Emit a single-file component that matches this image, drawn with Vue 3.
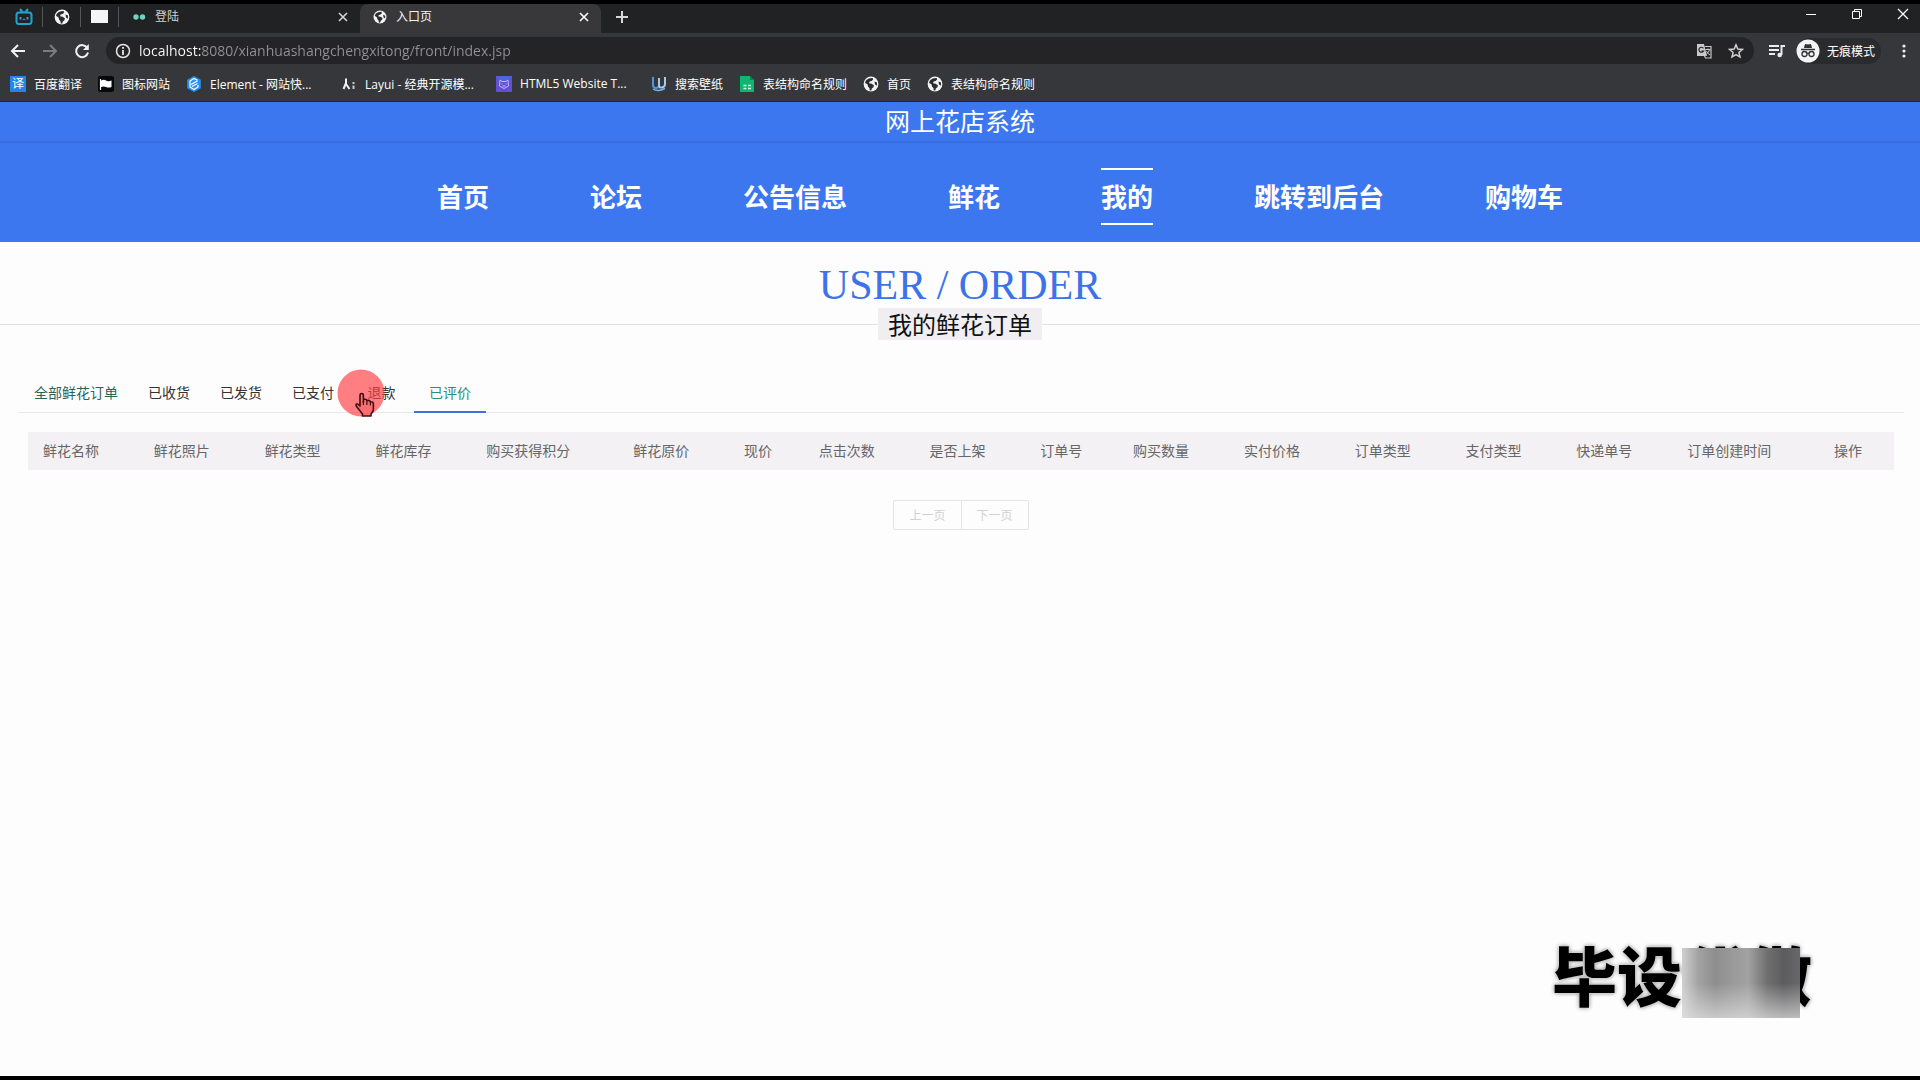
<script setup>
import { ref } from 'vue'

const url = ref('localhost:8080/xianhuashangchengxitong/front/index.jsp')

const bookmarks = [
  { icon: 'fanyi', label: '百度翻译' },
  { icon: 'flag', label: '图标网站' },
  { icon: 'element', label: 'Element - 网站快...', wide: true },
  { icon: 'layui', label: 'Layui - 经典开源模...', wide: true },
  { icon: 'html5', label: 'HTML5 Website T...', wide: true },
  { icon: 'search', label: '搜索壁纸' },
  { icon: 'sheet', label: '表结构命名规则' },
  { icon: 'globe', label: '首页' },
  { icon: 'globe', label: '表结构命名规则' }
]

const menu = ['首页', '论坛', '公告信息', '鲜花', '我的', '跳转到后台', '购物车']
const activeMenu = ref('我的')

const orderTabs = ['全部鲜花订单', '已收货', '已发货', '已支付', '退款', '已评价']
const activeTab = ref('已评价')

const columns = [
  '鲜花名称', '鲜花照片', '鲜花类型', '鲜花库存', '购买获得积分', '鲜花原价',
  '现价', '点击次数', '是否上架', '订单号', '购买数量', '实付价格',
  '订单类型', '支付类型', '快递单号', '订单创建时间', '操作'
]
</script>

<template>
  <div class="screen">
    <svg class="defs" width="0" height="0" aria-hidden="true">
      <symbol id="globe" viewBox="0 0 16 16">
        <circle cx="8" cy="8" r="7.4" fill="#f4f4f4" />
        <path d="M7 2.2 9.6 2l.6 1.6-1.6 1.5-2 .5-.5 1.7 2.5.5 2.3 1.4-.5 2-1.6 1.2-.5 2-1.6.2-.2-2.4L5 10.500 4.600 8.500 2 6.700C2.500 4.200 4.500 2.600 7 2.200Z" fill="#2b2c30" />
        <path d="M11.500 5.500 14 6.500 13.800 9.800 12 8.400Z" fill="#2b2c30" />
      </symbol>
    </svg>

    <header class="browser">
      <div class="tabstrip">
        <button class="pinned" aria-label="bilibili">
          <svg width="18" height="18" viewBox="0 0 18 18" fill="none" stroke="#20a5cf" stroke-width="2">
            <rect x="1.500" y="4.500" width="15" height="11.500" rx="2.500" />
            <path d="M5 1l2.500 3M13 1l-2.500 3M5.500 9v2.500M12.500 9v2.500" />
            <path d="M7.500 12l1.500-1 1.500 1" stroke-width="1" />
          </svg>
        </button>
        <button class="pinned" aria-label="首页"><svg width="16" height="16"><use href="#globe" /></svg></button>
        <button class="pinned" aria-label="空白页"><span class="blank"></span></button>
        <div class="tab">
          <svg class="favicon" width="14" height="14" viewBox="0 0 14 14" fill="#6fd3bd"><circle cx="4" cy="7" r="2.700" /><circle cx="10.500" cy="7" r="2.700" /></svg>
          <span class="tab-title">登陆</span>
          <button class="close" aria-label="关闭"><svg width="10" height="10" viewBox="0 0 10 10" stroke="#d6d6d8" stroke-width="1.600"><path d="M1 1l8 8M9 1l-8 8" /></svg></button>
        </div>
        <div class="tab current">
          <svg class="favicon" width="14" height="14"><use href="#globe" /></svg>
          <span class="tab-title">入口页</span>
          <button class="close" aria-label="关闭"><svg width="10" height="10" viewBox="0 0 10 10" stroke="#fff" stroke-width="1.600"><path d="M1 1l8 8M9 1l-8 8" /></svg></button>
        </div>
        <button class="newtab" aria-label="新标签页"><svg width="14" height="14" viewBox="0 0 14 14" stroke="#d8d8da" stroke-width="2"><path d="M7 1v12M1 7h12" /></svg></button>
        <div class="window-buttons">
          <button aria-label="最小化"><svg width="12" height="12" viewBox="0 0 12 12" stroke="#fff"><path d="M1 6.500h10" /></svg></button>
          <button aria-label="还原"><svg width="12" height="12" viewBox="0 0 12 12" fill="none" stroke="#fff"><path d="M1.500 3.500h7v7h-7zM3.500 3.500v-2h7v7h-2" /></svg></button>
          <button aria-label="关闭窗口"><svg width="12" height="12" viewBox="0 0 12 12" stroke="#fff" stroke-width="1.300"><path d="M1 1l10 10M11 1L1 11" /></svg></button>
        </div>
      </div>

      <div class="toolbar">
        <button class="tool" aria-label="后退"><svg width="16" height="16" viewBox="0 0 16 16" fill="none" stroke="#f1f1f1" stroke-width="2"><path d="M15 8H2M8 2L2 8l6 6" /></svg></button>
        <button class="tool" aria-label="前进"><svg width="16" height="16" viewBox="0 0 16 16" fill="none" stroke="#7b7c80" stroke-width="2"><path d="M1 8h13M8 2l6 6-6 6" /></svg></button>
        <button class="tool" aria-label="重新加载"><svg width="16" height="16" viewBox="0 0 16 16" fill="none" stroke="#f1f1f1" stroke-width="2"><path d="M13.300 5A6 6 0 1 0 14 9.500" /><path d="M14.800 1v6H9z" fill="#f1f1f1" stroke="none" /></svg></button>
        <div class="omnibox">
          <svg width="16" height="16" viewBox="0 0 16 16" fill="none" stroke="#e6e6e6" stroke-width="1.500"><circle cx="8" cy="8" r="6.500" /><path d="M8 7v5M8 4v1.800" stroke-width="1.800" /></svg>
          <input v-model="url" class="url" type="text" aria-label="地址" spellcheck="false" />
          <button aria-label="翻译">
            <svg width="16" height="16" viewBox="0 0 16 16"><path d="M1 1h7l3 12H1z" fill="#c9c9cb" /><path d="M9 3.500h6v11.500H9.500L8.500 13" fill="none" stroke="#c9c9cb" stroke-width="1.200" /><path d="M7.500 5.300A2.500 2.500 0 1 0 7.600 8H5.500" fill="none" stroke="#242427" stroke-width="1.200" /><path d="M9.500 6.500h5M12 5.500v1M13.500 6.500q-.5 3-3 4.500M10.500 8q1 2.500 3.500 4" fill="none" stroke="#c9c9cb" /></svg>
          </button>
          <button aria-label="收藏"><svg width="16" height="16" viewBox="0 0 16 16" fill="none" stroke="#cfcfd1" stroke-width="1.500"><path d="M8 1.800l1.800 4.200 4.600.4-3.500 3 1.100 4.500-4-2.400-4 2.400 1.100-4.500-3.500-3 4.600-.4z" /></svg></button>
        </div>
        <button class="tool playlist" aria-label="媒体控制"><svg width="18" height="16" viewBox="0 0 18 16" fill="none" stroke="#ececec" stroke-width="2"><path d="M1 3h10M1 7h10M1 11h6M13.500 12V3H17" /><circle cx="11.700" cy="12" r="2.300" fill="#ececec" stroke="none" /></svg></button>
        <button class="profile">
          <svg width="24" height="24" viewBox="0 0 24 24"><circle cx="12" cy="12" r="11.500" fill="#f4f4f5" /><path d="M8 9l1-4 3 .6L15 5l1 4z" fill="#303135" /><path d="M5 10.500h14" stroke="#303135" stroke-width="1.500" /><g fill="none" stroke="#303135" stroke-width="1.300"><circle cx="8.500" cy="15" r="2.500" /><circle cx="15.500" cy="15" r="2.500" /><path d="M11 14.500q1-.8 2 0" /></g></svg>
          <span>无痕模式</span>
        </button>
        <button class="tool more" aria-label="菜单"><svg width="4" height="16" viewBox="0 0 4 16" fill="#eee"><circle cx="2" cy="3" r="1.600" /><circle cx="2" cy="8" r="1.600" /><circle cx="2" cy="13" r="1.600" /></svg></button>
      </div>

      <nav class="bookmarks" aria-label="书签">
        <a v-for="(b, i) in bookmarks" :key="i" href="#" :class="{ wide: b.wide }">
          <span v-if="b.icon === 'fanyi'" class="fanyi">译</span>
          <svg v-else-if="b.icon === 'flag'" width="16" height="16" viewBox="0 0 16 16"><rect width="16" height="16" rx="2" fill="#08090a" /><path d="M2.500 3v11" stroke="#fff" stroke-width="1.200" /><path d="M3 4.500q3-1.500 5 0t5.500 0V11q-3 1.200-5.500 0T3 11z" fill="#fff" /></svg>
          <svg v-else-if="b.icon === 'element'" width="16" height="16" viewBox="0 0 16 16"><path d="M8 0l6.800 3.800v8.400L8 16l-6.800-3.800V3.800z" fill="#2491f5" /><path d="M11.500 4.200L8 2.500 4 5v6l4 2.500 4-2.500V9M5 8.500l6.500-3.800M6 10.500l5.500-3" fill="none" stroke="#fff" stroke-width="1.200" /></svg>
          <svg v-else-if="b.icon === 'layui'" width="16" height="16" viewBox="0 0 16 16" fill="none" stroke="#f1f1f1" stroke-width="2"><path d="M5 2.500V9M5 7l-2.500 6M5 8l3.500 5" /><path d="M12.500 6v2M12.500 9.500v3.500" stroke="#c9cacc" /></svg>
          <svg v-else-if="b.icon === 'html5'" width="16" height="16" viewBox="0 0 16 16"><rect width="16" height="16" fill="#6350d4" /><path d="M0 0h16L12 5H4z" fill="#4c66d9" /><path d="M4 4l2 1.500h4L12 4l.5 6L8 12.500 3.500 10z" fill="none" stroke="#c3baff" /><path d="M6 7.500v1M10 7.500v1M6.500 10h3" stroke="#c3baff" /></svg>
          <svg v-else-if="b.icon === 'search'" width="16" height="16" viewBox="0 0 16 16" fill="none" stroke="#4c96dd" stroke-width="2"><path d="M2 1v8q0 3 3 3t3-3V2" /><path d="M8 2v7q0 3 3 2.500T14 8V1" stroke="#a9c9ea" /><path d="M2 13q3 2 6 1.500t6-2" stroke="#79b3e6" stroke-width="1.500" /></svg>
          <svg v-else-if="b.icon === 'sheet'" width="16" height="16" viewBox="0 0 16 16"><path d="M1 0h10l4 4v12H1z" fill="#10b66f" /><path d="M11 0v4h4z" fill="#087e4b" /><path d="M4.500 9.500h3M9 9.500h3M4.500 12.500h3M9 12.500h3" stroke="#d6f5e6" stroke-width="1.500" /></svg>
          <svg v-else width="16" height="16"><use href="#globe" /></svg>
          {{ b.label }}
        </a>
      </nav>
    </header>

    <div class="banner">
      <h1 class="site-name">网上花店系统</h1>
      <nav class="menu" aria-label="主导航">
        <a v-for="m in menu" :key="m" href="#" :class="{ active: m === activeMenu }" @click.prevent="activeMenu = m">{{ m }}</a>
      </nav>
    </div>

    <main class="page">
      <h2 class="heading">USER / ORDER</h2>
      <div class="subheading"><span>我的鲜花订单</span></div>

      <section class="orders">
        <div class="order-tabs" role="tablist">
          <button v-for="t in orderTabs" :key="t" role="tab" :aria-selected="t === activeTab"
            :class="{ all: t === '全部鲜花订单', active: t === activeTab }" @click="activeTab = t">{{ t }}<svg v-if="t === '退款'" class="pointer" width="48" height="50" viewBox="0 0 48 50" aria-hidden="true">
              <circle cx="24" cy="24" r="23.500" fill="#ff3d42" fill-opacity=".66" />
              <path d="M23 37V26.500q0-2 1.700-2t1.700 2v7-3q3-.8 3.500 1 3-.6 3.500 1.200 3-.2 3 2.300v5q0 3-2.400 5v2h-8.500v-2l-6-7.500q-1.500-3 1.200-2.500z" fill="#ff6d70" stroke="#3a1014" stroke-width="1.600" stroke-linejoin="round" />
              <path d="M26.400 32v4M29.900 32v4M33.400 33v3.500" stroke="#3a1014" stroke-width="1.200" />
            </svg></button>
        </div>
        <div class="order-body">
          <table class="order-table">
            <thead>
              <tr><th v-for="c in columns" :key="c" scope="col">{{ c }}</th></tr>
            </thead>
          </table>
          <div class="pager">
            <button disabled>上一页</button>
            <button disabled>下一页</button>
          </div>
        </div>
      </section>

      <div class="watermark">毕设代做<span class="mosaic"></span></div>
    </main>
  </div>
</template>

<style>
body {
  margin: 0;
  background: #fefdfe;
}
</style>

<style scoped>
.screen {
  display: flex;
  flex-direction: column;
  box-sizing: border-box;
  min-height: 100vh;
  border-top: 4px solid #000;
  border-bottom: 4px solid #000;
  font-family: "Open Sans", "Noto Sans CJK SC", sans-serif;
  font-size: 14px;
}
.defs {
  position: absolute;
}
button {
  padding: 0;
  border: 0;
  background: none;
  font: inherit;
  color: inherit;
  cursor: pointer;
}
a {
  color: inherit;
  text-decoration: none;
}
svg {
  flex: none;
}

/* browser frame */
.browser {
  background: #36373a;
  border-bottom: 1px solid #1d2540;
  color: #fff;
  font-size: 12px;
}
.tabstrip {
  display: flex;
  align-items: center;
  height: 29px;
  padding-left: 5px;
  background: #212224;
}
.pinned {
  display: flex;
  align-items: center;
  justify-content: center;
  box-sizing: border-box;
  width: 38px;
  height: 20px;
  margin-bottom: 4px;
  border-right: 1px solid #55565a;
}
.blank {
  width: 17px;
  height: 13px;
  background: #f5f5f5;
}
.tab {
  display: flex;
  align-items: center;
  gap: 9px;
  box-sizing: border-box;
  width: 241px;
  height: 29px;
  padding: 0 12px 4px 13px;
  color: #cfd0d2;
}
.tab-title {
  flex: 1;
  line-height: 18px;
}
.close {
  display: flex;
}
.current {
  border-radius: 8px 8px 0 0;
  background: #38383b;
  color: #f2f2f2;
}
.newtab {
  display: flex;
  margin: 0 0 4px 14px;
}
.window-buttons {
  display: flex;
  gap: 34px;
  margin: 0 11px 10px auto;
}
.window-buttons button {
  display: flex;
}
.toolbar {
  display: flex;
  align-items: center;
  height: 35px;
  padding: 0 14px 0 10px;
}
.tool {
  display: flex;
  margin-right: 16px;
}
.omnibox {
  display: flex;
  flex: 1;
  align-items: center;
  gap: 16px;
  height: 27px;
  margin-right: 14px;
  padding: 0 10px 0 9px;
  border-radius: 14px;
  background: #242326;
}
.omnibox button {
  display: flex;
}
.url {
  flex: 1;
  min-width: 0;
  height: 24px;
  margin-left: -8px;
  padding: 0;
  border: 0;
  outline: 0;
  background: linear-gradient(90deg, #fff 62px, #929296 62px);
  -webkit-background-clip: text;
  background-clip: text;
  color: transparent;
  font: inherit;
  font-size: 14px;
}
.playlist {
  margin-right: 10px;
}
.profile {
  display: flex;
  align-items: center;
  gap: 7px;
  height: 26px;
  margin-right: 21px;
  padding-right: 6px;
  border-radius: 13px;
  background: #2a2b2e;
}
.more {
  margin-right: 0;
}
.bookmarks {
  display: flex;
  align-items: center;
  height: 31px;
  padding: 0 0 2px 10px;
}
.bookmarks a {
  display: flex;
  flex: none;
  align-items: center;
  gap: 8px;
  box-sizing: border-box;
  padding-right: 16px;
  white-space: nowrap;
}
.bookmarks .wide {
  width: 155px;
  padding-right: 0;
}
.fanyi {
  width: 16px;
  background: #2385f2;
  line-height: 16px;
  text-align: center;
}

/* site banner */
.banner {
  background: #3c77f0;
  color: #fff;
  font-family: "Noto Sans CJK SC", sans-serif;
}
.site-name {
  margin: 0;
  height: 39px;
  border-bottom: 2px solid #356ce0;
  font-size: 25px;
  font-weight: 400;
  line-height: 36px;
  text-align: center;
}
.menu {
  display: flex;
  justify-content: center;
  gap: 101px;
  padding: 25px 0 17px 80px;
}
.menu a {
  padding-bottom: 2px;
  border-top: 2px solid transparent;
  border-bottom: 2px solid transparent;
  font-size: 26px;
  font-weight: 700;
  line-height: 51px;
}
.menu .active {
  border-color: #fff;
}

/* order page */
.page {
  position: relative;
  flex: 1;
  font-family: "Noto Sans CJK SC", sans-serif;
}
.heading {
  margin: 20px 0 0;
  color: #3d73e8;
  font-family: "Liberation Serif", serif;
  font-size: 42px;
  font-weight: 400;
  line-height: 46px;
  text-align: center;
}
.subheading {
  display: flex;
  align-items: center;
}
.subheading::before,
.subheading::after {
  content: "";
  flex: 1;
  height: 1px;
  background: #e2e0e4;
}
.subheading span {
  padding: 0 10px;
  background: #f0eef1;
  color: #111;
  font-size: 24px;
  line-height: 32px;
}
.orders {
  margin: 32px 16px 0 18px;
}
.order-tabs {
  display: flex;
  height: 40px;
  padding-left: 1px;
  border-bottom: 1px solid #e6e8ee;
}
.order-tabs button {
  position: relative;
  box-sizing: border-box;
  min-width: 65px;
  height: 41px;
  padding: 0 15px;
  border-bottom: 2px solid transparent;
  color: #333;
  line-height: 38px;
}
.order-tabs .all {
  color: #2b6455;
}
.order-tabs .active {
  border-color: #3f72d4;
  color: #2e8c74;
}
.pointer {
  position: absolute;
  top: -3px;
  left: -12px;
}
.order-body {
  padding: 19px 10px 0;
}
.order-table {
  width: 100%;
  border-collapse: collapse;
  background: #f3f1f4;
  color: #666;
}
.order-table th {
  padding: 8px 15px 10px;
  font-weight: 400;
  line-height: 20px;
  text-align: left;
  white-space: nowrap;
}
.pager {
  display: flex;
  justify-content: center;
  margin-top: 30px;
}
.pager button {
  padding: 0 15px;
  border: 1px solid #e6e2e8;
  border-radius: 2px 0 0 2px;
  color: #d2d0d4;
  font-size: 12px;
  line-height: 28px;
}
.pager button + button {
  margin-left: -1px;
  border-radius: 0 2px 2px 0;
}
.watermark {
  position: absolute;
  right: 108px;
  bottom: 55px;
  color: #000;
  font-size: 65px;
  font-weight: 900;
  line-height: 96px;
  text-shadow: 0 0 2px #fff, 0 0 4px #666;
}
.mosaic {
  position: absolute;
  top: 23px;
  right: 12px;
  width: 118px;
  height: 70px;
  background:
    linear-gradient(180deg, transparent 50%, rgba(225, 225, 225, .7) 100%),
    linear-gradient(90deg, #d0d0d0 0, #a2a2a2 14%, #8e8e8e 28%, #999 42%, #a2a2a2 56%, #707070 72%, #5c5c5e 86%, #68686a 100%);
}
</style>
